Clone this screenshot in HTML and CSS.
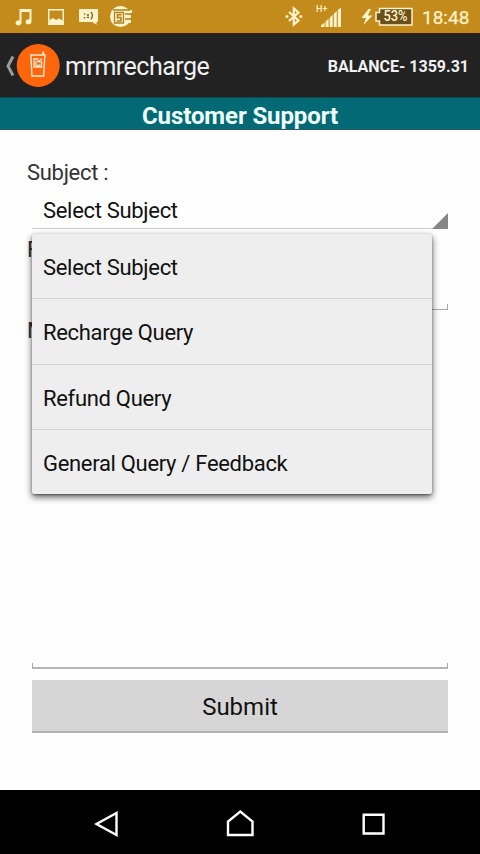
FILE: index.html
```html
<!DOCTYPE html>
<html lang="en">
<head>
<meta charset="utf-8">
<title>Customer Support</title>
<link rel="stylesheet" href="styles.css">
</head>
<body>
<div class="screen">
  <header class="status">
    <svg class="notifications" width="140" height="33" viewBox="0 0 140 33" fill="#fff3c9">
      <path d="M19.500 9H31.500V21.500A3 2.500 0 1 1 29.500 19.500V12H21.500V22.500A3 2.500 0 1 1 19.500 20.500Z"/>
      <path fill-rule="evenodd" d="M48 9H64V25H48ZM49.5 10.5V22.5H62.5V10.5Z"/>
      <path d="M49.5 22V20L53 18L56 20L59 18.5L62.5 20.5V23H49.5Z"/>
      <path d="M79 9H98V22H96.5V25L92.5 22H79Z"/>
      <g fill="none" stroke="#806225" stroke-width="1.3"><path d="M84.5 13.2V14.8M84.5 17V18.6M86.8 15H89M86.8 17.3H89M90.8 12C93 14 93 17 90.8 19.2"/></g>
      <circle cx="120.500" cy="16.500" r="10.500"/>
      <path d="M124 10H132V13H124ZM124 15H130V18H124ZM124 20H131V23H124Z"/>
      <g fill="none" stroke="#af811e" stroke-width="1.300"><path d="M114.500 12.500H123.500V23H114.500ZM113 10H130M125 14H132M125 19H132"/><path stroke-width="1.600" d="M121.700 14.700H117.500V17.600H121V21H116.500"/></g>
    </svg>
    <div class="indicators">
      <svg width="58" height="33" viewBox="284 0 58 33">
        <path d="M289 12L298.500 20.500L293.800 24.500V8.500L298.500 12.500L289 21" fill="none" stroke="#fff3c9" stroke-width="2.200"/>
        <circle cx="287" cy="16.500" r="1.500" fill="#fff3c9"/><circle cx="300.800" cy="16.500" r="1.500" fill="#fff3c9"/>
        <path d="M321 27V25.500L324.500 22.500V27ZM325.600 27V21.500L328.600 18.700V27ZM329.700 27V17.700L332.700 14.800V27ZM333.800 27V13.800L336.700 11V27ZM337.800 27V10L341 7.500V27Z" fill="#fff3c9"/>
        <text class="network" x="316" y="11.500">H+</text>
      </svg>
      <svg class="bolt" width="12" height="33" viewBox="361 0 12 33"><path d="M368.500 9L361.500 18H366L363.500 25L372.500 15.500H367.800L371 9Z" fill="#fff3c9"/></svg>
      <svg class="battery" width="38" height="33" viewBox="375 0 38 33">
        <path d="M379.500 8.500H412V25H379.500V21H376V12.500H379.500Z" fill="#6b501b" stroke="#fff3c9" stroke-width="1.500"/>
        <text class="percent" x="383.500" y="21.300" textLength="24" lengthAdjust="spacingAndGlyphs">53%</text>
      </svg>
      <span class="clock">18:48</span>
    </div>
  </header>
  <div class="appbar">
    <svg class="brand-icon" width="60" height="64" viewBox="0 33 60 64">
      <path d="M13 55.500L8 65L13 74.500" fill="none" stroke="#9a9a9a" stroke-width="3"/>
      <circle cx="38.200" cy="64.500" r="21.500" fill="#ff660b"/>
      <g fill="none" stroke="#ffe9d2" stroke-width="1.400">
        <path d="M30.800 54H44.800L43.700 75H32Z"/><path d="M43.200 54V50.500" stroke-width="2"/>
        <path d="M41.500 60V66H34V58H38.500M40 61.500A2.300 2.300 0 1 0 40 63.500M38.500 61L42 57.500"/>
      </g>
    </svg>
    <span class="brand">mrmrecharge</span>
    <span class="balance">BALANCE- 1359.31</span>
  </div>
  <h1 class="title">Customer Support</h1>
  <main class="form">
    <div class="label">Subject :</div>
    <div class="select">
      <span>Select Subject</span>
      <svg class="corner" width="16" height="16" viewBox="0 0 16 16"><path d="M16 0V16H0Z" fill="#868686"/></svg>
      <div class="menu">
        <div class="option">Select Subject</div>
        <div class="option">Recharge Query</div>
        <div class="option">Refund Query</div>
        <div class="option">General Query / Feedback</div>
      </div>
    </div>
    <div class="label second">F</div>
    <div class="field"></div>
    <div class="label third">M</div>
    <div class="field message"></div>
    <button class="submit">Submit</button>
  </main>
  <nav class="nav">
    <svg width="480" height="64" viewBox="0 790 480 64" fill="none" stroke="#fff" stroke-width="2.400">
      <path d="M116.500 813V835L96.500 824Z"/>
      <path d="M228 835V821.500L240.300 811.500L252.500 821.500V835Z"/>
      <path d="M363.700 814.700H383.500V833.500H363.700Z"/>
    </svg>
  </nav>
</div>
</body>
</html>
```
FILE: styles.css
```css
* { box-sizing: border-box; }
body { margin: 0; font-family: Roboto, sans-serif; background: #fefefe; color: #111; }
.screen { width: 480px; height: 854px; display: flex; flex-direction: column; overflow: hidden; }
.status { height: 33px; flex: none; display: flex; justify-content: space-between; background: #c38b1c; color: #fff3c9; }
.indicators { display: flex; align-items: center; padding-right: 11px; }
.bolt { margin-left: 19px; }
.battery { margin-left: 2px; }
.network { font-size: 9px; font-weight: 500; fill: #fff3c9; }
.percent { font-size: 14px; font-weight: 500; fill: #fff3c9; }
.clock { width: 47px; margin-left: 9px; font-size: 19px; line-height: 33px; white-space: nowrap; padding-top: 2px; -webkit-text-stroke: .25px currentColor; }
.appbar { height: 64px; flex: none; display: flex; align-items: center; background: #222; border-top: 1px solid #352310; color: #f0f0f0; }
.brand { margin-left: 5px; font-size: 25px; letter-spacing: -.5px; line-height: 30px; padding-top: 3px; }
.balance { margin-left: auto; margin-right: 11px; padding-top: 1px; font-size: 16px; font-weight: 700; }
.title { height: 33px; flex: none; margin: 0; padding-top: 2px; background: #036a75; border-top: 1px solid #0b4b52; border-bottom: 1px solid #255c62; color: #effffd; font-size: 24px; letter-spacing: -.1px; line-height: 32px; font-weight: 700; text-align: center; }
.form { flex: 1; display: flex; flex-direction: column; padding: 30px 32px 0; }
.label { height: 26px; margin-left: -5px; font-size: 22px; letter-spacing: -.3px; line-height: 26px; color: #333; }
.select { position: relative; height: 34px; margin-top: 9px; padding-left: 11px; border-bottom: 1px solid #ccc; font-size: 22px; letter-spacing: -.31px; line-height: 31px; }
.corner { position: absolute; right: 0; bottom: -1px; }
.menu { position: absolute; z-index: 1; top: 39px; left: 0; width: 400px; height: 260px; display: grid; grid-template-rows: 65px 66px 65px 64px; background: #eee; border-radius: 2px; box-shadow: 0 3px 7px rgba(0,0,0,.65), 0 1px 2px rgba(0,0,0,.3); }
.option { padding-left: 11px; line-height: 67px; border-bottom: 1px solid #d3d3d3; }
.option:last-child { border-bottom: 0; }
.second { width: 5px; overflow: hidden; margin-top: 8px; }
.field { height: 6px; margin-top: 41px; border: 1px solid #aaa; border-top: 0; }
.third { width: 5px; overflow: hidden; margin-top: 8px; }
.message { margin-top: 319px; border-bottom-width: 2px; border-bottom-color: #b5b5b5; }
.submit { height: 53px; margin: 11px 0 0; padding: 2px 0 0; border: 0; border-bottom: 2px solid #b2b2b2; border-radius: 1px; background: #d6d6d6; color: #111; font: 24px/50px Roboto, sans-serif; }
.nav { height: 64px; flex: none; background: #000; }
```
